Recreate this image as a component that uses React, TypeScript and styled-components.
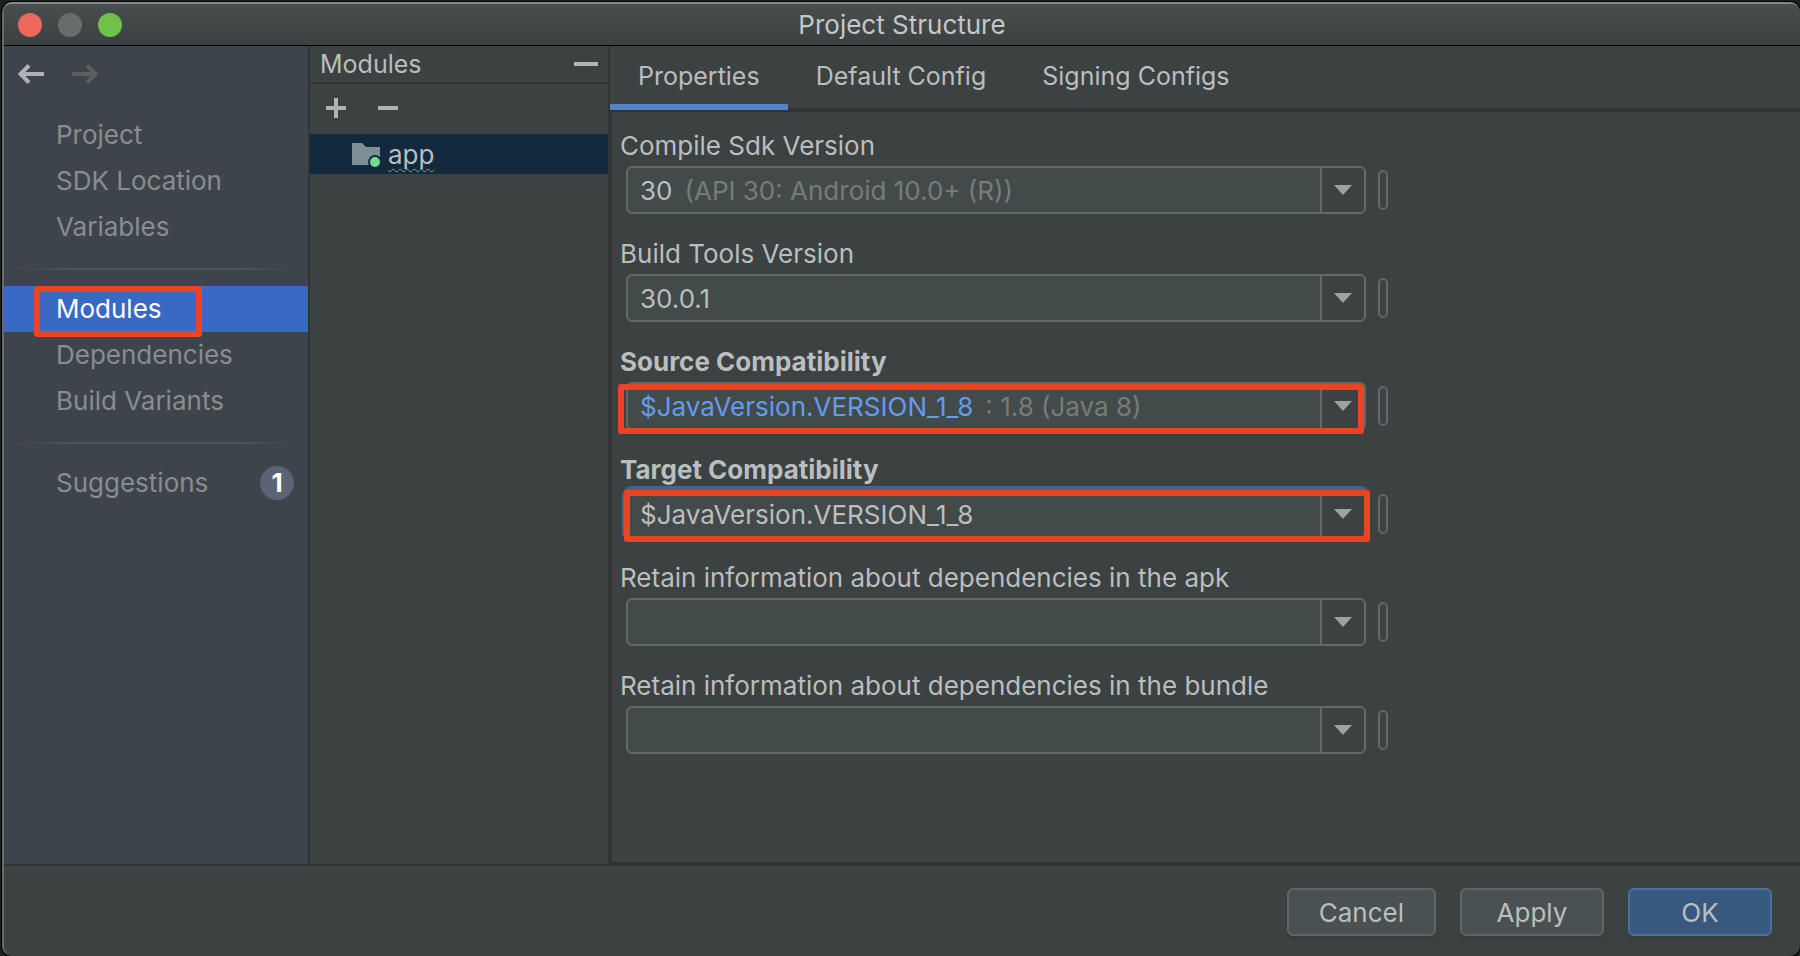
import React, { useState } from "react";
import styled, { createGlobalStyle, css } from "styled-components";

const color = {
  panel: "#3c4141",
  sidebar: "#3d444c",
  line: "#303434",
  field: "#434b4a",
  border: "#646868",
  text: "#bbbebe",
  muted: "#8a8d8d",
  hint: "#777b7b",
  icon: "#afb3b3",
  iconDisabled: "#5c5f60",
  selected: "#3968c5",
  focus: "#426591",
  mark: "#ec4226",
};

const GlobalStyle = createGlobalStyle`
  *, *::before, *::after { box-sizing: border-box; }
  body {
    margin: 0;
    background: #1d2020;
    color: ${color.text};
    font: 400 26px/32px Inter, "Liberation Sans", sans-serif;
  }
  button, input { font: inherit; color: inherit; }
  button { padding: 0; border: 0; background: none; cursor: pointer; }
  h1, h2, ul { margin: 0; padding: 0; font: inherit; list-style: none; }
`;

const Desktop = styled.div`
  display: flex;
  min-height: 100vh;
  padding: 2px 0 0 2px;
`;

const Window = styled.div`
  flex: 1;
  min-width: 0;
  display: flex;
  flex-direction: column;
  overflow: hidden;
  border-top: 2px solid #868b8a;
  border-left: 2px solid #676b6c;
  border-radius: 10px;
  background: ${color.panel};
  box-shadow: 0 0 0 1px #000;
`;

const TitleBar = styled.header`
  display: grid;
  grid-template-columns: 1fr auto 1fr;
  align-items: center;
  height: 42px;
  padding: 0 14px;
  background: linear-gradient(#484e4d, #3b4040);
  border-bottom: 1px solid #000;
`;

const Lights = styled.div`
  display: flex;
  gap: 16px;
`;

const Light = styled.button<{ $color: string }>`
  width: 24px;
  height: 24px;
  border-radius: 50%;
  background: ${(p) => p.$color};
`;

const Title = styled.h1`
  color: #c4c8c8;
`;

const Body = styled.div`
  flex: 1;
  display: grid;
  grid-template-columns: 306px 300px minmax(0, 1fr);
`;

const Sidebar = styled.nav`
  background: ${color.sidebar};
  border-right: 2px solid ${color.line};
`;

const History = styled.div`
  display: flex;
  gap: 28px;
  padding: 16px 14px 26px;
`;

const IconButton = styled.button`
  display: flex;
  color: ${color.icon};
  &:disabled {
    color: ${color.iconDisabled};
    cursor: default;
  }
`;

const Separator = styled.hr`
  height: 2px;
  margin: 18px 8px 16px;
  border: 0;
  background: linear-gradient(90deg, transparent, #515453 25%, #515453 75%, transparent);
`;

const NavLink = styled.a<{ $active?: boolean }>`
  display: flex;
  align-items: center;
  justify-content: space-between;
  height: 46px;
  padding: 0 14px 0 52px;
  color: ${color.muted};
  text-decoration: none;
  ${(p) =>
    p.$active &&
    css`
      position: relative;
      background: ${color.selected};
      color: #fff;
    `}
`;

const Badge = styled.span`
  width: 34px;
  height: 34px;
  border-radius: 50%;
  background: #5b6474;
  color: #fff;
  font-weight: 700;
  line-height: 34px;
  text-align: center;
`;

const Mark = styled.span<{ $inset: string }>`
  position: absolute;
  inset: ${(p) => p.$inset};
  z-index: 1;
  border: 6px solid ${color.mark};
  border-radius: 3px;
  pointer-events: none;
`;

const ModulePanel = styled.section`
  border-right: 2px solid ${color.line};
`;

const PanelHeader = styled.div`
  display: flex;
  align-items: center;
  justify-content: space-between;
  height: 38px;
  padding: 0 10px;
  border-bottom: 2px solid ${color.line};
  font-size: 25px;
  line-height: 36px;
`;

const Toolbar = styled.div`
  display: flex;
  align-items: center;
  gap: 32px;
  height: 50px;
  padding: 0 16px 2px;
`;

const ModuleRow = styled.button`
  display: flex;
  align-items: center;
  gap: 8px;
  width: 100%;
  height: 40px;
  padding: 2px 42px 0;
  background: #12293e;
`;

const ModuleName = styled.span`
  text-decoration: underline wavy #8f9596 1px;
  text-underline-offset: 4px;
  text-decoration-skip-ink: none;
`;

const Content = styled.main`
  border-bottom: 2px solid ${color.line};
`;

const TabList = styled.div`
  display: flex;
  height: 66px;
  box-shadow: inset 0 -4px ${color.line};
`;

const Tab = styled.button`
  height: 64px;
  padding: 2px 28px 0;
  border-bottom: 6px solid transparent;
  font-size: 25px;
  &[aria-selected="true"] { border-bottom-color: #5585c5; }
`;

const Form = styled.form`
  display: flex;
  flex-direction: column;
  gap: 24px;
  height: calc(100% - 66px);
  padding: 18px 12px 24px 8px;
  border-left: 2px solid ${color.line};
`;

const Field = styled.div`
  display: flex;
  flex-direction: column;
  gap: 4px;
`;

const Label = styled.label<{ $bold?: boolean }>`
  line-height: 32px;
  font-weight: ${(p) => (p.$bold ? 700 : 400)};
`;

const FieldRow = styled.div`
  display: flex;
  align-items: center;
  gap: 12px;
  height: 48px;
  padding-left: 6px;
`;

const Combo = styled.div<{ $focused?: boolean }>`
  position: relative;
  display: flex;
  width: 100%;
  max-width: 740px;
  height: 48px;
  border: 2px solid ${color.border};
  border-radius: 6px;
  background: ${color.field};
  ${(p) =>
    p.$focused &&
    css`
      border-color: ${color.focus};
      box-shadow: 0 0 0 4px ${color.focus};
    `}
`;

const ComboText = styled.div`
  flex: 1;
  min-width: 0;
  display: flex;
  align-items: center;
  gap: 12px;
  padding: 2px 0 0 12px;
  white-space: nowrap;
  overflow: hidden;
`;

const ComboInput = styled.input<{ $reference?: boolean }>`
  field-sizing: content;
  min-width: 4px;
  padding: 0;
  border: 0;
  outline: 0;
  background: none;
  color: ${(p) => (p.$reference ? "#639bee" : "inherit")};
`;

const Hint = styled.span`
  color: ${color.hint};
`;

const ComboButton = styled.button`
  display: flex;
  align-items: center;
  justify-content: center;
  width: 44px;
  border-left: 2px solid ${color.border};
  border-radius: 0 4px 4px 0;
  background: ${color.panel};
`;

const VariableButton = styled.button`
  width: 10px;
  height: 40px;
  border: 2px solid ${color.border};
  border-radius: 5px;
`;

const Footer = styled.footer`
  display: flex;
  align-items: flex-start;
  justify-content: flex-end;
  gap: 24px;
  height: 92px;
  padding: 22px 28px 0;
  border-top: 2px solid ${color.line};
`;

const Button = styled.button<{ $primary?: boolean }>`
  min-width: 144px;
  height: 48px;
  padding: 2px 30px 0;
  border: 2px solid ${(p) => (p.$primary ? "#4b719a" : "#5f6464")};
  border-radius: 6px;
  background: ${(p) => (p.$primary ? "#38597f" : "#4a5152")};
  box-shadow: 0 3px 1px #373b3b;
`;

const BackIcon = () => (
  <svg width="26" height="24" viewBox="0 0 26 24" fill="none" stroke="currentColor" strokeWidth="4">
    <path d="M26 12H3M11 3.500L2.500 12L11 20.500" />
  </svg>
);

const ForwardIcon = () => (
  <svg width="26" height="24" viewBox="0 0 26 24" fill="none" stroke="currentColor" strokeWidth="4">
    <path d="M0 12H23M15 3.500L23.500 12L15 20.500" />
  </svg>
);

const PlusIcon = () => (
  <svg width="20" height="20" viewBox="0 0 20 20" fill="currentColor">
    <path d="M8 0h4v8h8v4h-8v8H8v-8H0V8h8z" />
  </svg>
);

const MinusIcon = ({ width = 20 }: { width?: number }) => (
  <svg width={width} height="20" fill="currentColor">
    <rect y="8" width={width} height="4" />
  </svg>
);

const FolderIcon = () => (
  <svg width="28" height="24" viewBox="0 0 28 24">
    <path d="M0 0h9q2 0 3 2t3 2h13v18H0z" fill="#7f8e97" />
    <circle cx="23" cy="19" r="7" fill="#12293e" />
    <circle cx="23" cy="19" r="5" fill="#6fdc8c" />
  </svg>
);

const ArrowIcon = () => (
  <svg width="18" height="10" viewBox="0 0 18 10" fill="#9da1a3">
    <path d="M0 0h18L9 10z" />
  </svg>
);

const navGroups = [
  ["Project", "SDK Location", "Variables"],
  ["Modules", "Dependencies", "Build Variants"],
  ["Suggestions"],
];

const tabs = ["Properties", "Default Config", "Signing Configs"];

type FieldSpec = {
  id: string;
  label: string;
  value: string;
  hint?: string;
  bold?: boolean;
  reference?: boolean;
  focused?: boolean;
  mark?: string;
};

const fields: FieldSpec[] = [
  { id: "sdk", label: "Compile Sdk Version", value: "30", hint: "(API 30: Android 10.0+ (R))" },
  { id: "tools", label: "Build Tools Version", value: "30.0.1" },
  {
    id: "source",
    label: "Source Compatibility",
    value: "$JavaVersion.VERSION_1_8",
    hint: ": 1.8 (Java 8)",
    bold: true,
    reference: true,
    mark: "0 0 -6px -10px",
  },
  {
    id: "target",
    label: "Target Compatibility",
    value: "$JavaVersion.VERSION_1_8",
    bold: true,
    focused: true,
    mark: "-2px -6px -6px -4px",
  },
  { id: "apk", label: "Retain information about dependencies in the apk", value: "" },
  { id: "bundle", label: "Retain information about dependencies in the bundle", value: "" },
];

function ComboField({ spec }: { spec: FieldSpec }) {
  const [value, setValue] = useState(spec.value);
  return (
    <Field>
      <Label htmlFor={spec.id} $bold={spec.bold}>{spec.label}</Label>
      <FieldRow>
        <Combo $focused={spec.focused}>
          <ComboText>
            <ComboInput
              id={spec.id}
              role="combobox"
              aria-expanded={false}
              spellCheck={false}
              $reference={spec.reference}
              value={value}
              onChange={(e) => setValue(e.target.value)}
            />
            {spec.hint && <Hint>{spec.hint}</Hint>}
          </ComboText>
          <ComboButton type="button" aria-label={`${spec.label} options`}>
            <ArrowIcon />
          </ComboButton>
          {spec.mark && <Mark $inset={spec.mark} />}
        </Combo>
        <VariableButton type="button" aria-label={`Bind ${spec.label} to a variable`} />
      </FieldRow>
    </Field>
  );
}

export default function App() {
  const [tab, setTab] = useState(tabs[0]);
  return (
    <Desktop>
      <GlobalStyle />
      <Window>
        <TitleBar>
          <Lights>
            <Light $color="#ec685d" aria-label="Close" />
            <Light $color="#676c6c" aria-label="Minimize" />
            <Light $color="#70c149" aria-label="Zoom" />
          </Lights>
          <Title>Project Structure</Title>
        </TitleBar>
        <Body>
          <Sidebar>
            <History>
              <IconButton aria-label="Back"><BackIcon /></IconButton>
              <IconButton aria-label="Forward" disabled><ForwardIcon /></IconButton>
            </History>
            {navGroups.map((group, i) => (
              <React.Fragment key={group[0]}>
                {i > 0 && <Separator />}
                <ul>
                  {group.map((name) => (
                    <li key={name}>
                      <NavLink href={`#${name}`} $active={name === "Modules"}>
                        {name}
                        {name === "Suggestions" && <Badge>1</Badge>}
                        {name === "Modules" && <Mark $inset="0 106px -5px 30px" />}
                      </NavLink>
                    </li>
                  ))}
                </ul>
              </React.Fragment>
            ))}
          </Sidebar>
          <ModulePanel>
            <PanelHeader>
              <h2>Modules</h2>
              <IconButton aria-label="Hide"><MinusIcon width={24} /></IconButton>
            </PanelHeader>
            <Toolbar>
              <IconButton aria-label="Add module"><PlusIcon /></IconButton>
              <IconButton aria-label="Remove module"><MinusIcon /></IconButton>
            </Toolbar>
            <ModuleRow>
              <FolderIcon />
              <ModuleName>app</ModuleName>
            </ModuleRow>
          </ModulePanel>
          <Content>
            <TabList role="tablist">
              {tabs.map((name) => (
                <Tab key={name} role="tab" aria-selected={name === tab} onClick={() => setTab(name)}>
                  {name}
                </Tab>
              ))}
            </TabList>
            <Form>
              {fields.map((spec) => <ComboField key={spec.id} spec={spec} />)}
            </Form>
          </Content>
        </Body>
        <Footer>
          <Button>Cancel</Button>
          <Button>Apply</Button>
          <Button $primary>OK</Button>
        </Footer>
      </Window>
    </Desktop>
  );
}
